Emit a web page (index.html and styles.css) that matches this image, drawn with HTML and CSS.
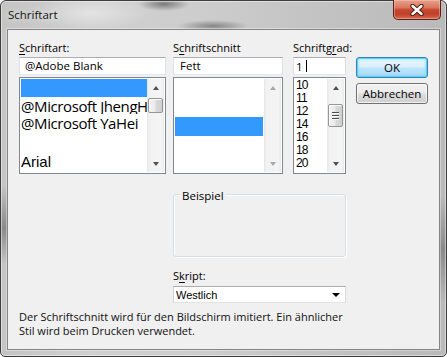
FILE: index.html
```html
<!DOCTYPE html>
<html lang="de">
<head>
<meta charset="utf-8">
<title>Schriftart</title>
<link rel="stylesheet" href="styles.css">
</head>
<body>
<div class="window">
  <div class="titlebar">
    <span class="title">Schriftart</span>
    <div class="close">
      <svg width="14" height="12" viewBox="0 0 14 12"><path d="M2.5 2 L11.5 10 M11.5 2 L2.5 10" stroke="#4a1c12" stroke-width="4.4" stroke-linecap="round"/><path d="M2.5 2 L11.5 10 M11.5 2 L2.5 10" stroke="#ffffff" stroke-width="2.4" stroke-linecap="round"/></svg>
    </div>
  </div>
  <div class="client">
    <div class="top">
      <div class="col col-font">
        <div class="lbl"><u>S</u>chriftart:</div>
        <div class="input">@Adobe Blank</div>
        <div class="list">
          <div class="rows">
            <div class="row sel-font"></div>
            <div class="row frow">@Microsoft JhengHei</div>
            <div class="row frow">@Microsoft YaHei</div>
            <div class="row blank"></div>
            <div class="row frow arial">Arial</div>
          </div>
          <div class="sb">
            <div class="sb-btn"><span class="arr up"></span></div>
            <div class="sb-track"><div class="thumb thumb-font"></div></div>
            <div class="sb-btn"><span class="arr down"></span></div>
          </div>
        </div>
      </div>
      <div class="col col-style">
        <div class="lbl">S<u>c</u>hriftschnitt</div>
        <div class="input input-style">Fett</div>
        <div class="list">
          <div class="rows">
            <div class="row sel-style"></div>
          </div>
          <div class="sb">
            <div class="sb-btn"><span class="arr up dis"></span></div>
            <div class="sb-track"></div>
            <div class="sb-btn"><span class="arr down dis"></span></div>
          </div>
        </div>
      </div>
      <div class="col col-size">
        <div class="lbl">Schriftg<u>r</u>ad:</div>
        <div class="input input-size">1<span class="caret"></span></div>
        <div class="list">
          <div class="rows sizes">
            <div class="srow">10</div>
            <div class="srow">11</div>
            <div class="srow">12</div>
            <div class="srow">14</div>
            <div class="srow">16</div>
            <div class="srow">18</div>
            <div class="srow">20</div>
          </div>
          <div class="sb">
            <div class="sb-btn"><span class="arr up"></span></div>
            <div class="sb-track"><div class="thumb thumb-size"><span class="grip"></span><span class="grip"></span><span class="grip"></span></div></div>
            <div class="sb-btn"><span class="arr down"></span></div>
          </div>
        </div>
      </div>
      <div class="buttons">
        <div class="btn btn-default">OK</div>
        <div class="btn">Abbrechen</div>
      </div>
    </div>
    <div class="lower">
      <div class="group">
        <span class="group-title">Beispiel</span>
      </div>
      <div class="lbl lbl-script">S<u>k</u>ript:</div>
      <div class="select">
        <span>Westlich</span>
        <span class="sel-arrow"></span>
      </div>
    </div>
    <p class="note">Der Schriftschnitt wird für den Bildschirm imitiert. Ein ähnlicher<br>Stil wird beim Drucken verwendet.</p>
  </div>
</div>
</body>
</html>
```

FILE: styles.css
```css
* { box-sizing: border-box; margin: 0; padding: 0; }
html, body { width: 447px; height: 357px; overflow: hidden; background: #ffffff; }
body { font-family: "Open Sans", "Noto Sans", sans-serif; font-size: 11px; color: #000; }

.window {
  width: 447px;
  height: 357px;
  border: 1px solid #3d3d3d;
  border-radius: 6px 6px 5px 5px;
  padding: 0 6px 6px 6px;
  display: flex;
  flex-direction: column;
  background:
    radial-gradient(ellipse 26px 7px at 163px 3px, rgba(95,95,95,0.75), rgba(95,95,95,0) 100%),
    radial-gradient(ellipse 36px 6px at 212px 25px, rgba(105,105,105,0.7), rgba(105,105,105,0) 100%),
    radial-gradient(ellipse 60px 16px at 90px 12px, rgba(235,235,235,0.7), rgba(235,235,235,0) 100%),
    linear-gradient(to bottom, rgba(90,90,90,0) 52%, rgba(90,90,90,0.55) 64%, rgba(90,90,90,0) 74%) left top / 7px 100% no-repeat,
    linear-gradient(to bottom, rgba(90,90,90,0) 55%, rgba(90,90,90,0.5) 70%, rgba(90,90,90,0) 85%) right top / 7px 100% no-repeat,
    linear-gradient(90deg, #c4c4c4 0%, #d0d0d0 20%, #cdcdcd 45%, #c3c3c3 70%, #bababa 100%);
  box-shadow: inset 0 0 0 1px rgba(255,255,255,0.45);
}

.titlebar {
  height: 28px;
  display: flex;
  justify-content: space-between;
  align-items: flex-start;
  flex: none;
}
.title {
  padding: 6px 0 0 1px;
  line-height: 15px;
  font-size: 11.5px;
  color: #111;
  text-shadow: 0 0 6px rgba(255,255,255,0.9);
}
.close {
  width: 48px;
  height: 20px;
  margin: -1px -1px 0 0;
  border: 1px solid #5a2116;
  border-top: none;
  border-radius: 0 0 5px 5px;
  background: linear-gradient(#e8a18c 0%, #d9775f 40%, #c5452d 52%, #c1412a 75%, #d46f52 100%);
  box-shadow: inset 0 0 0 1px rgba(255,215,200,0.4);
  display: flex;
  align-items: center;
  justify-content: center;
}

.client {
  flex: 1;
  background: #f0f0f0;
  border: 1px solid #858585;
  box-shadow: 0 0 0 1px rgba(255,255,255,0.35);
  padding: 10px 0 0 11px;
  display: flex;
  flex-direction: column;
}

.top { display: flex; align-items: flex-start; }
.col { display: flex; flex-direction: column; }
.col-font { width: 147px; }
.col-style { width: 110px; margin-left: 7px; }
.col-size { width: 53px; margin-left: 10px; }

.lbl { line-height: 15px; height: 15px; margin-bottom: 2px; }
.lbl u { text-decoration-thickness: 1px; text-underline-offset: 2px; }

.input {
  height: 18px;
  background: #fff;
  border: 1px solid;
  border-color: #abadb3 #dbdfe6 #e3e9ef #e2e3ea;
  padding: 0 4px 0 5px;
  line-height: 15px;
  font-size: 11.5px;
  white-space: nowrap;
  overflow: hidden;
}
.input-style { padding-left: 6px; }
.input-size { padding-left: 2px; display: flex; align-items: center; }
.caret { display: inline-block; width: 1px; height: 12px; background: #000; margin-left: 3px; }

.list {
  margin-top: 2px;
  height: 97px;
  background: #fff;
  border: 1px solid #828790;
  padding: 1px;
  display: flex;
  overflow: hidden;
}
.rows { flex: 1; overflow: hidden; min-width: 0; }
.row { white-space: nowrap; overflow: hidden; }
.sel-font { height: 18px; background: #3399ff; }
.frow {
  height: 17px;
  padding-top: 1px;
  line-height: 17px;
  font-size: 15px;
  letter-spacing: -0.4px;
  font-family: "Open Sans", sans-serif;
  color: #000;
}
.blank { height: 21px; }
.arial { font-family: "Liberation Sans", Arial, sans-serif; font-size: 15px; letter-spacing: 0; height: 19px; padding-top: 2px; line-height: 16px; }
.sel-style { height: 19px; margin-top: 38px; background: #3399ff; margin-right: 1px; }

.sizes { padding-left: 1px; }
.srow {
  height: 13px;
  line-height: 13px;
  font-family: "Liberation Sans", Arial, sans-serif;
  font-size: 12px;
  letter-spacing: -0.8px;
}

.sb {
  width: 17px;
  flex: none;
  display: flex;
  flex-direction: column;
  background: linear-gradient(90deg, #e6e6e6 0%, #f2f2f2 15%, #f4f4f4 85%, #e9e9e9 100%);
}
.sb-btn { height: 17px; flex: none; display: flex; align-items: center; justify-content: center; }
.sb-track { flex: 1; padding: 1px 1px 0 1px; }
.arr { width: 0; height: 0; border-left: 3.5px solid transparent; border-right: 3.5px solid transparent; }
.arr.up { border-bottom: 4px solid #505050; }
.arr.down { border-top: 4px solid #505050; }
.arr.up.dis { border-bottom-color: #a8a8a8; }
.arr.down.dis { border-top-color: #a8a8a8; }

.thumb {
  width: 15px;
  border: 1px solid #959595;
  border-radius: 2px;
  background: linear-gradient(90deg, #f4f4f4 0%, #eaeaea 45%, #d9d9d9 55%, #cfcfcf 100%);
  box-shadow: inset 1px 1px 0 rgba(255,255,255,0.9);
}
.thumb-font { height: 15px; margin-top: 1px; }
.thumb-size {
  height: 23px;
  margin-top: 7px;
  display: flex;
  flex-direction: column;
  align-items: center;
  justify-content: center;
  gap: 1px;
}
.grip { display: block; width: 7px; height: 2px; border-top: 1px solid #4f4f4f; border-bottom: 1px solid #f8f8f8; }

.buttons {
  display: flex;
  flex-direction: column;
  margin-left: 10px;
  margin-top: 17px;
  gap: 5px;
}
.btn {
  width: 72px;
  height: 21px;
  border: 1px solid #707070;
  border-radius: 3px;
  background: linear-gradient(#f2f2f2 0%, #ebebeb 48%, #dddddd 52%, #cfcfcf 100%);
  box-shadow: inset 0 0 0 1px rgba(255,255,255,0.7);
  display: flex;
  align-items: center;
  justify-content: center;
  font-size: 11.5px;
  line-height: 15px;
}
.btn-default {
  border-color: #3c7fb1;
  background: linear-gradient(#eaf6fd 0%, #d9f0fc 48%, #bee6fd 52%, #a7d9f5 100%);
  box-shadow: inset 0 0 0 1px #4fd5ff, inset 0 0 2px 2px rgba(120,220,255,0.5);
}

.lower {
  margin-left: 154px;
  width: 173px;
  margin-top: 20px;
  display: flex;
  flex-direction: column;
}
.group {
  height: 63px;
  border: 1px solid #d5dfe5;
  border-radius: 3px;
  box-shadow: inset 1px 1px 0 #ffffff, 1px 1px 0 #ffffff;
}
.group-title {
  display: inline-block;
  margin: -7px 0 0 6px;
  padding: 0 2px;
  background: #f0f0f0;
  line-height: 15px;
  font-size: 11.5px;
  vertical-align: top;
}
.lbl-script { margin-top: 11px; margin-bottom: 3px; }
.select {
  height: 17px;
  background: #fff;
  border: 1px solid #a9a9a9;
  border-color: #acacac #d9d9d9 #e3e3e3 #cfcfcf;
  display: flex;
  align-items: center;
  justify-content: space-between;
  padding: 0 5px 0 2px;
  font-family: "Liberation Sans", Arial, sans-serif;
  font-size: 11px;
}
.sel-arrow { width: 0; height: 0; border-left: 4px solid transparent; border-right: 4px solid transparent; border-top: 4px solid #000; }

.note {
  margin-top: 7px;
  line-height: 14px;
  font-size: 11px;
  color: #111;
}
```
